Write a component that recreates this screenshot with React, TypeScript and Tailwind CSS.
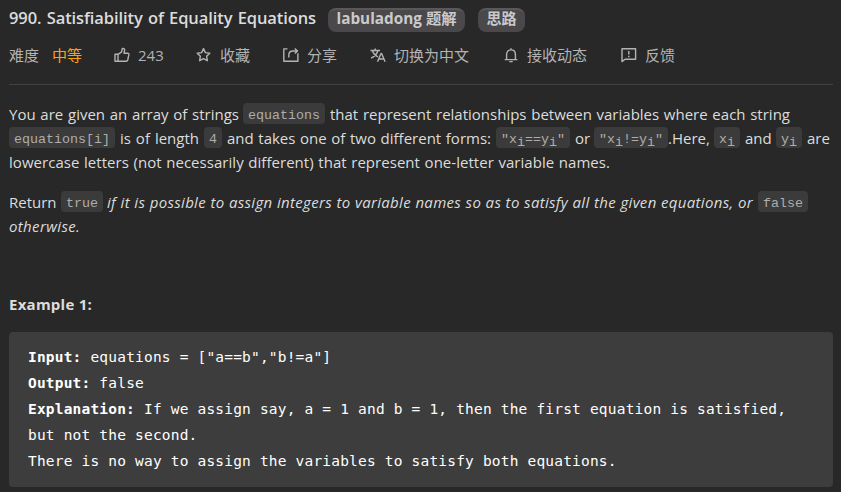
import type { ReactNode } from "react";

const stroke = {
  fill: "none",
  stroke: "currentColor",
  strokeWidth: 1.4,
  strokeLinejoin: "round" as const,
};

function Run({ w, className = "", children }: { w: string; className?: string; children: ReactNode }) {
  return (
    <span className={`shrink-0 whitespace-nowrap [text-align-last:justify] ${w} ${className}`}>
      {children}
    </span>
  );
}

function Code({ className = "", children }: { className?: string; children: ReactNode }) {
  return (
    <code
      className={`mt-px h-[21px] shrink-0 whitespace-pre rounded bg-[#3b3b3b] px-[5px] font-['Liberation_Mono',monospace] text-[13.33px] leading-[25px] text-[#adadad] ${className}`}
    >
      {children}
    </code>
  );
}

function Sub() {
  return <span className="relative top-[3px]">i</span>;
}

function Tool({ className = "", icon, label }: { className?: string; icon: ReactNode; label: string }) {
  return (
    <button className={`flex shrink-0 items-center whitespace-nowrap ${className}`}>
      <svg width="16" height="16" viewBox="0 0 16 16" className="mr-2 shrink-0" {...stroke}>
        {icon}
      </svg>
      {label}
    </button>
  );
}

export default function App() {
  return (
    <main className="h-[492px] w-[841px] overflow-hidden bg-[#282828] pl-[9px] pr-2 pt-2 font-['Open_Sans','Noto_Sans_CJK_SC',sans-serif] text-[15px] text-[#dcdcdc]">
      <header className="flex h-6 items-center">
        <h1 className="mr-3 w-[307px] whitespace-nowrap text-[16.5px] font-semibold leading-5 tracking-[-0.1px] -mt-1 [text-align-last:justify]">
          990. Satisfiability of Equality Equations
        </h1>
        <span className="mr-[13px] flex h-6 w-[137px] items-center justify-center whitespace-nowrap rounded-lg border-t-2 border-[#5a595a] bg-[#4a484a] pb-1.5 text-[15.3px] font-bold leading-5 text-[#cacaca]">
          labuladong 题解
        </span>
        <span className="flex h-6 w-[47px] items-center justify-center whitespace-nowrap rounded-lg border-t-2 border-[#5a595a] bg-[#4a484a] pb-1.5 font-bold leading-5 text-[#cacaca]">
          思路
        </span>
      </header>

      <div className="mt-[11px] flex h-6 items-center leading-6 text-[#b3b3b3]">
        <span className="w-[43px]">难度</span>
        <span className="w-[62px] text-[#ffa116]">中等</span>
        <Tool
          className="w-[82px]"
          label="243"
          icon={<path d="M1 7.2h3v7H1zM4 7.4l3.4-2.2 1-3.7c1.6-.3 2.4.5 2.2 2L10 6.2h3.8c.8 0 1.3.6 1.1 1.4l-1.2 5.4c-.2.8-.7 1.2-1.5 1.2H4" />}
        />
        <Tool
          className="w-[87px]"
          label="收藏"
          icon={<path d="m7.5 1.6 1.9 4 4.4.6-3.2 3 .8 4.5-3.9-2.1-3.9 2.1.8-4.5-3.2-3 4.4-.6z" />}
        />
        <Tool
          className="w-[87px]"
          label="分享"
          icon={<path d="M4.5 1.9H.8v12.3h14.1V6.2M5.8 10.6V8.2c0-2.6 1.4-4.2 4-4.2h4.4M11.8 1.4 14.5 4l-2.7 2.6" />}
        />
        <Tool
          className="w-[133px]"
          label="切换为中文"
          icon={<path d="M.5 3.5h9.5M5.2 1.4v2.1M8 3.5c-.8 3-3.2 5.8-6.9 7.6M2.4 3.5c.8 2.7 2.8 5 5.5 6.4M7.5 14.8l3.5-8.3h.6l3.5 8.3M8.8 12h5" />}
        />
        <Tool
          className="w-[118px]"
          label="接收动态"
          icon={<path d="M1.7 12.6h12.6M3.6 12.6V7.4C3.6 4.8 5.3 2.9 8 2.9s4.4 1.9 4.4 4.5v5.2M8 1.2v1.7M6.3 14.6h3.4" />}
        />
        <Tool
          label="反馈"
          icon={<path d="M1 1.7h13.6v10.6H4L1 14.6zM7.8 4v3.4M7.8 8.8v1.5" />}
        />
      </div>

      <div className="mt-[17px] h-px bg-[#424242]" />

      <div className="mt-[17px] leading-6">
        <div className="flex h-6">
          <Run w="w-[230px]" className="mr-1">You are given an array of strings</Run>
          <Code className="mr-[5px]">equations</Code>
          <Run w="w-[460px]">that represent relationships between variables where each string</Run>
        </div>
        <div className="flex h-6">
          <Code className="mr-[5px]">equations[i]</Code>
          <Run w="w-[79px]" className="mr-[5px]">is of length</Run>
          <Code className="mr-[5px]">4</Code>
          <Run w="w-[264px]" className="mr-[5px]">and takes one of two different forms:</Run>
          <Code className="mr-[5px]">″x<Sub />==y<Sub />″</Code>
          <Run w="w-[15px]" className="mr-1">or</Run>
          <Code>″x<Sub />!=y<Sub />″</Code>
          <Run w="w-[46px]">.Here,</Run>
          <Code className="mr-[5px]">x<Sub /></Code>
          <Run w="w-[26px]" className="mr-[5px]">and</Run>
          <Code className="mr-[5px]">y<Sub /></Code>
          <Run w="w-[22px]">are</Run>
        </div>
        <Run w="block w-[601px]" className="tracking-[0.04px]">
          lowercase letters (not necessarily different) that represent one-letter variable names.
        </Run>
      </div>

      <div className="mt-4 leading-6">
        <div className="flex h-6">
          <Run w="w-[47px]" className="mr-[5px]">Return</Run>
          <Code className="mr-1">true</Code>
          <Run w="w-[646px]" className="mr-[5px] italic tracking-[0.32px]">
            if it is possible to assign integers to variable names so as to satisfy all the given equations, or
          </Run>
          <Code>false</Code>
        </div>
        <Run w="block w-[71px]" className="italic tracking-[0.36px]">otherwise.</Run>
      </div>

      <h2 className="mt-[54px] w-[84px] whitespace-nowrap font-bold leading-6 tracking-[0.25px]">Example 1:</h2>

      <pre className="mt-4 h-[155px] rounded bg-[#3d3d3d] px-[19px] pt-3 font-['DejaVu_Sans_Mono',monospace] text-[14.5px] leading-[26px] tracking-[0.19px] text-white">
        <b>Input:</b>{` equations = ["a==b","b!=a"]\n`}
        <b>Output:</b>{` false\n`}
        <b>Explanation:</b>{` If we assign say, a = 1 and b = 1, then the first equation is satisfied,\nbut not the second.\nThere is no way to assign the variables to satisfy both equations.`}
      </pre>
    </main>
  );
}
